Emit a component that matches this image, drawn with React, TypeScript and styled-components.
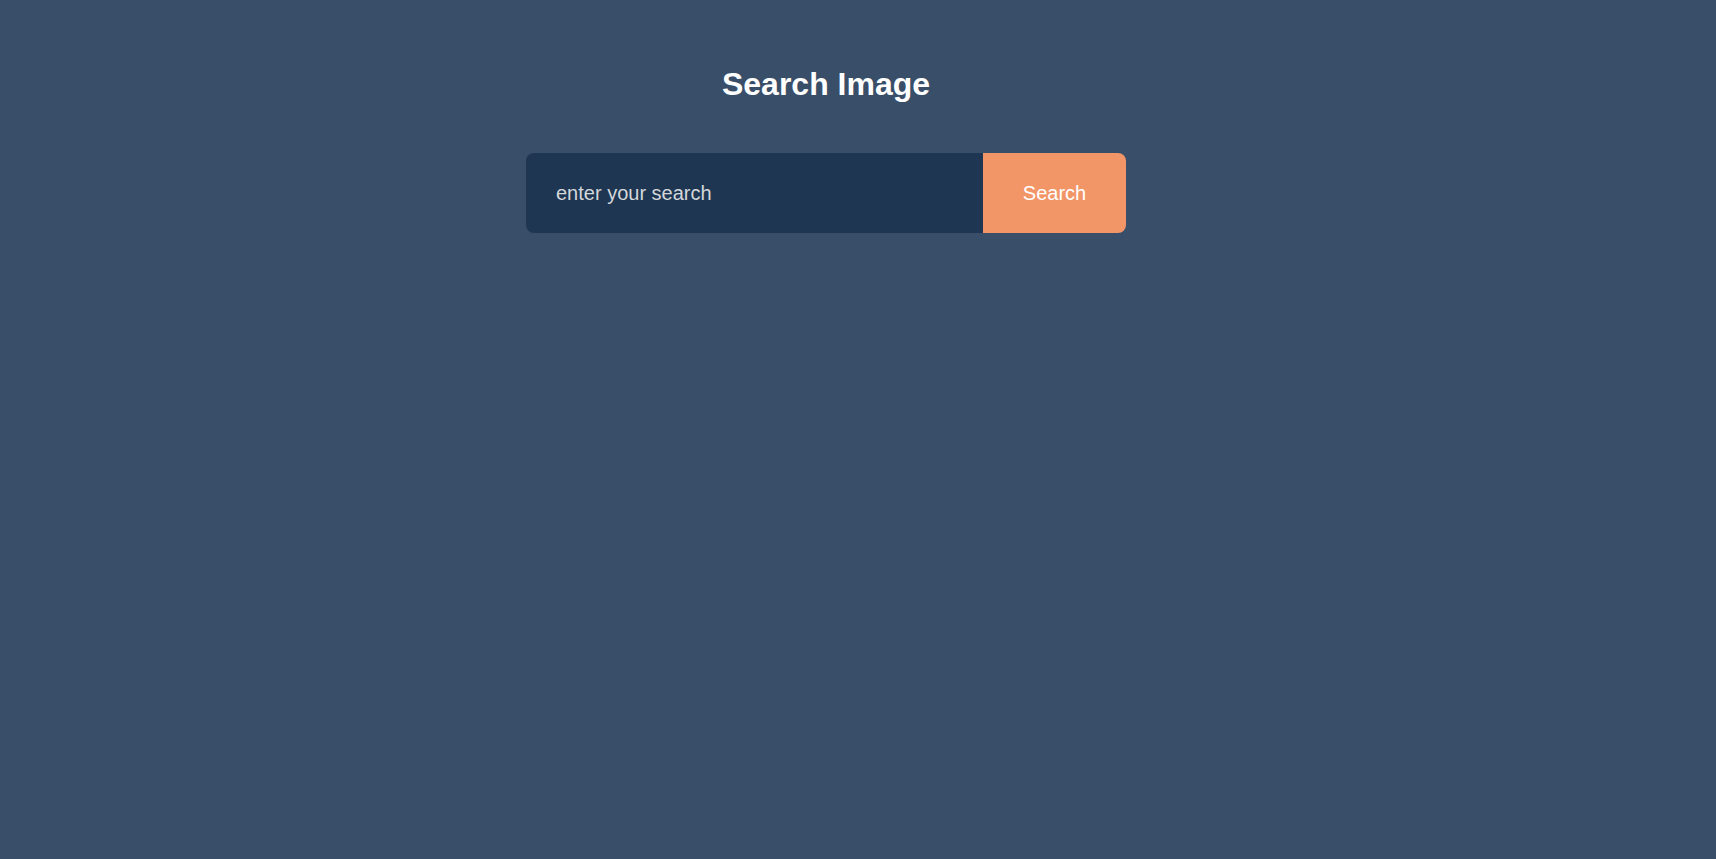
import React from "react";
import styled, { createGlobalStyle } from "styled-components";

const Global = createGlobalStyle`
  html, body { margin: 0; padding: 0; background: #394e68; }
  body { font-family: "Liberation Sans", Arial, sans-serif; min-height: 100vh; }
  * { box-sizing: border-box; }
`;

const Page = styled.main`
  min-height: 100vh;
  padding: 66px 64px 0 0;
  display: flex;
  flex-direction: column;
  align-items: center;
`;

const Title = styled.h1`
  margin: 0 0 50px;
  font-size: 32px;
  line-height: 37px;
  font-weight: 700;
  color: #ffffff;
`;

const Form = styled.form`
  display: flex;
  width: 600px;
  height: 80px;
  border-radius: 8px;
  overflow: hidden;
`;

const Input = styled.input`
  flex: 1;
  border: none;
  outline: none;
  background: #1e3652;
  color: #ffffff;
  padding: 0 30px;
  font-family: "Liberation Sans", Arial, sans-serif;
  font-size: 20px;
  &::placeholder { color: #d4d7da; }
`;

const Button = styled.button`
  width: 143px;
  border: none;
  background: #f29668;
  color: #ffffff;
  font-family: "Liberation Sans", Arial, sans-serif;
  font-size: 20px;
  cursor: pointer;
`;

export default function App() {
  return (
    <>
      <Global />
      <Page>
        <Title>Search Image</Title>
        <Form onSubmit={(e) => e.preventDefault()}>
          <Input placeholder="enter your search" />
          <Button type="submit">Search</Button>
        </Form>
      </Page>
    </>
  );
}
